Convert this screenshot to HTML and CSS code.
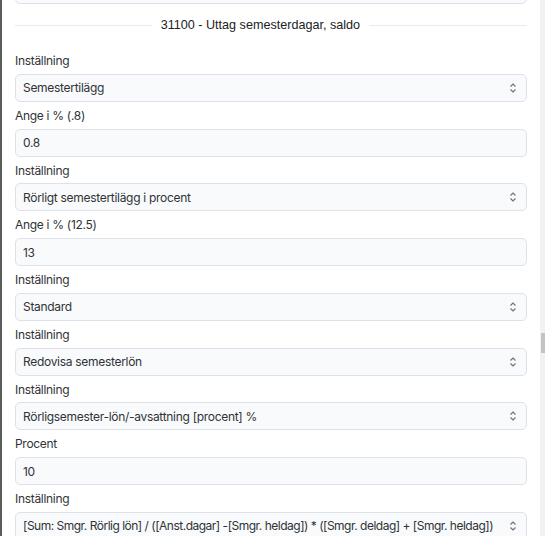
FILE: index.html
```html
<!DOCTYPE html>
<html lang="sv">
<head>
  <meta charset="UTF-8" />
  <meta name="viewport" content="width=device-width, initial-scale=1.0"/>
  <title>Lönearter : Inställningar</title>
  <link rel="stylesheet" href="styles.css">
</head>
<body>
  <div class="edge"></div>

  <div class="panel">
    <div class="field cut"></div>

    <div class="section-title">
      <span>31100 - Uttag semesterdagar, saldo</span>
    </div>

    <label class="lbl first">Inställning</label>
    <div class="select-wrap">
      <select class="field">
        <option>Semestertilägg</option>
      </select>
      <svg class="chev" viewBox="0 0 8 12"><path d="M1.5 4.5 4 2l2.5 2.5M1.5 7.5 4 10l2.5-2.5"/></svg>
    </div>

    <label class="lbl">Ange i % (.8)</label>
    <input class="field" type="text" value="0.8">

    <label class="lbl">Inställning</label>
    <div class="select-wrap">
      <select class="field">
        <option>Rörligt semestertilägg i procent</option>
      </select>
      <svg class="chev" viewBox="0 0 8 12"><path d="M1.5 4.5 4 2l2.5 2.5M1.5 7.5 4 10l2.5-2.5"/></svg>
    </div>

    <label class="lbl">Ange i % (12.5)</label>
    <input class="field" type="text" value="13">

    <label class="lbl">Inställning</label>
    <div class="select-wrap">
      <select class="field">
        <option>Standard</option>
      </select>
      <svg class="chev" viewBox="0 0 8 12"><path d="M1.5 4.5 4 2l2.5 2.5M1.5 7.5 4 10l2.5-2.5"/></svg>
    </div>

    <label class="lbl">Inställning</label>
    <div class="select-wrap">
      <select class="field">
        <option>Redovisa semesterlön</option>
      </select>
      <svg class="chev" viewBox="0 0 8 12"><path d="M1.5 4.5 4 2l2.5 2.5M1.5 7.5 4 10l2.5-2.5"/></svg>
    </div>

    <label class="lbl">Inställning</label>
    <div class="select-wrap">
      <select class="field">
        <option>Rörligsemester-lön/-avsattning [procent] %</option>
      </select>
      <svg class="chev" viewBox="0 0 8 12"><path d="M1.5 4.5 4 2l2.5 2.5M1.5 7.5 4 10l2.5-2.5"/></svg>
    </div>

    <label class="lbl">Procent</label>
    <input class="field" type="text" value="10">

    <label class="lbl">Inställning</label>
    <div class="select-wrap">
      <select class="field formula">
        <option>[Sum: Smgr. Rörlig lön] / ([Anst.dagar] -[Smgr. heldag]) * ([Smgr. deldag] + [Smgr. heldag])</option>
      </select>
      <svg class="chev" viewBox="0 0 8 12"><path d="M1.5 4.5 4 2l2.5 2.5M1.5 7.5 4 10l2.5-2.5"/></svg>
    </div>
  </div>

  <div class="scroll-track">
    <div class="scroll-thumb"></div>
  </div>
</body>
</html>
```

FILE: styles.css
```css
body {
  margin: 0;
  height: 536px;
  overflow: hidden;
  display: flex;
  background-color: #ffffff;
  font-family: Inter, "Noto Sans", sans-serif;
  font-size: 12px;
  letter-spacing: -0.3px;
  color: #2f3337;
}

.edge {
  width: 2px;
  flex: none;
  background-color: #5c5c5c;
}

.panel {
  flex: 1;
  display: flex;
  flex-direction: column;
  padding: 0 13px;
  min-width: 0;
}

.scroll-track {
  width: 5px;
  flex: none;
  background-color: #f1f1f1;
}

.scroll-thumb {
  margin-top: 333px;
  margin-left: 1px;
  height: 20px;
  background-color: #c3c3c3;
}

.field {
  display: block;
  flex: none;
  width: 100%;
  height: 28px;
  box-sizing: border-box;
  margin: 0;
  padding: 0 20px 0 7px;
  border: 1px solid #dde2ea;
  border-radius: 5px;
  background-color: #f9fafc;
  font: inherit;
  letter-spacing: inherit;
  color: #2f3337;
  appearance: none;
  outline: none;
  white-space: nowrap;
  overflow: hidden;
}

.field.cut {
  margin-top: -24px;
}

.field.formula {
  letter-spacing: -0.5px;
}

.section-title {
  display: flex;
  align-items: center;
  gap: 9px;
  margin-top: 11px;
  line-height: 20px;
  font-family: "Liberation Sans", Arial, sans-serif;
  font-size: 12.6px;
  letter-spacing: 0;
  color: #222222;
}

.section-title::before,
.section-title::after {
  content: "";
  flex: 135 1 0;
  height: 1px;
  background-color: #e6eaf1;
}

.section-title::after {
  flex-grow: 156;
}

.lbl {
  display: block;
  flex: none;
  line-height: 20px;
  margin: 4px 0 2.75px;
}

.lbl.first {
  margin-top: 16px;
}

.select-wrap {
  position: relative;
  flex: none;
}

.chev {
  position: absolute;
  right: 10px;
  top: 8px;
  width: 8px;
  height: 12px;
  fill: none;
  stroke: #6b6f75;
  stroke-width: 1.1;
}
```
